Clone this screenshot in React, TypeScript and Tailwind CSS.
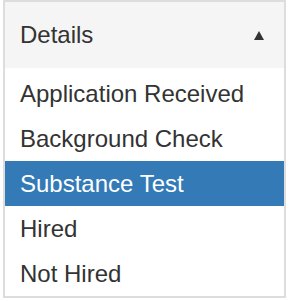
import React from "react";

const items = [
  "Application Received",
  "Background Check",
  "Substance Test",
  "Hired",
  "Not Hired",
];

export default function App() {
  const selected = "Substance Test";

  return (
    <div className="w-[289px] h-[301px] bg-white" style={{ fontFamily: '"Liberation Sans", Arial, sans-serif' }}>
      <div className="ml-[3px] w-[283px] border-2 border-[#dddddd] bg-white text-[#333333]">
        {/* Header */}
        <div className="h-[66px] bg-[#f5f5f5] flex items-center justify-between pl-[15px] pr-[20px]">
          <span className="text-[24px] leading-none">Details</span>
          <svg width="10" height="9" viewBox="0 0 10 9" className="mt-[1px]">
            <polygon points="5,0 10,9 0,9" fill="#333333" />
          </svg>
        </div>

        {/* Options */}
        <ul className="pt-[3px]">
          {items.map((item) => (
            <li
              key={item}
              className={`h-[45px] flex items-center pl-[15px] text-[24px] leading-none ${
                item === selected ? "bg-[#337ab7] text-white" : ""
              }`}
            >
              {item}
            </li>
          ))}
        </ul>
      </div>
    </div>
  );
}
